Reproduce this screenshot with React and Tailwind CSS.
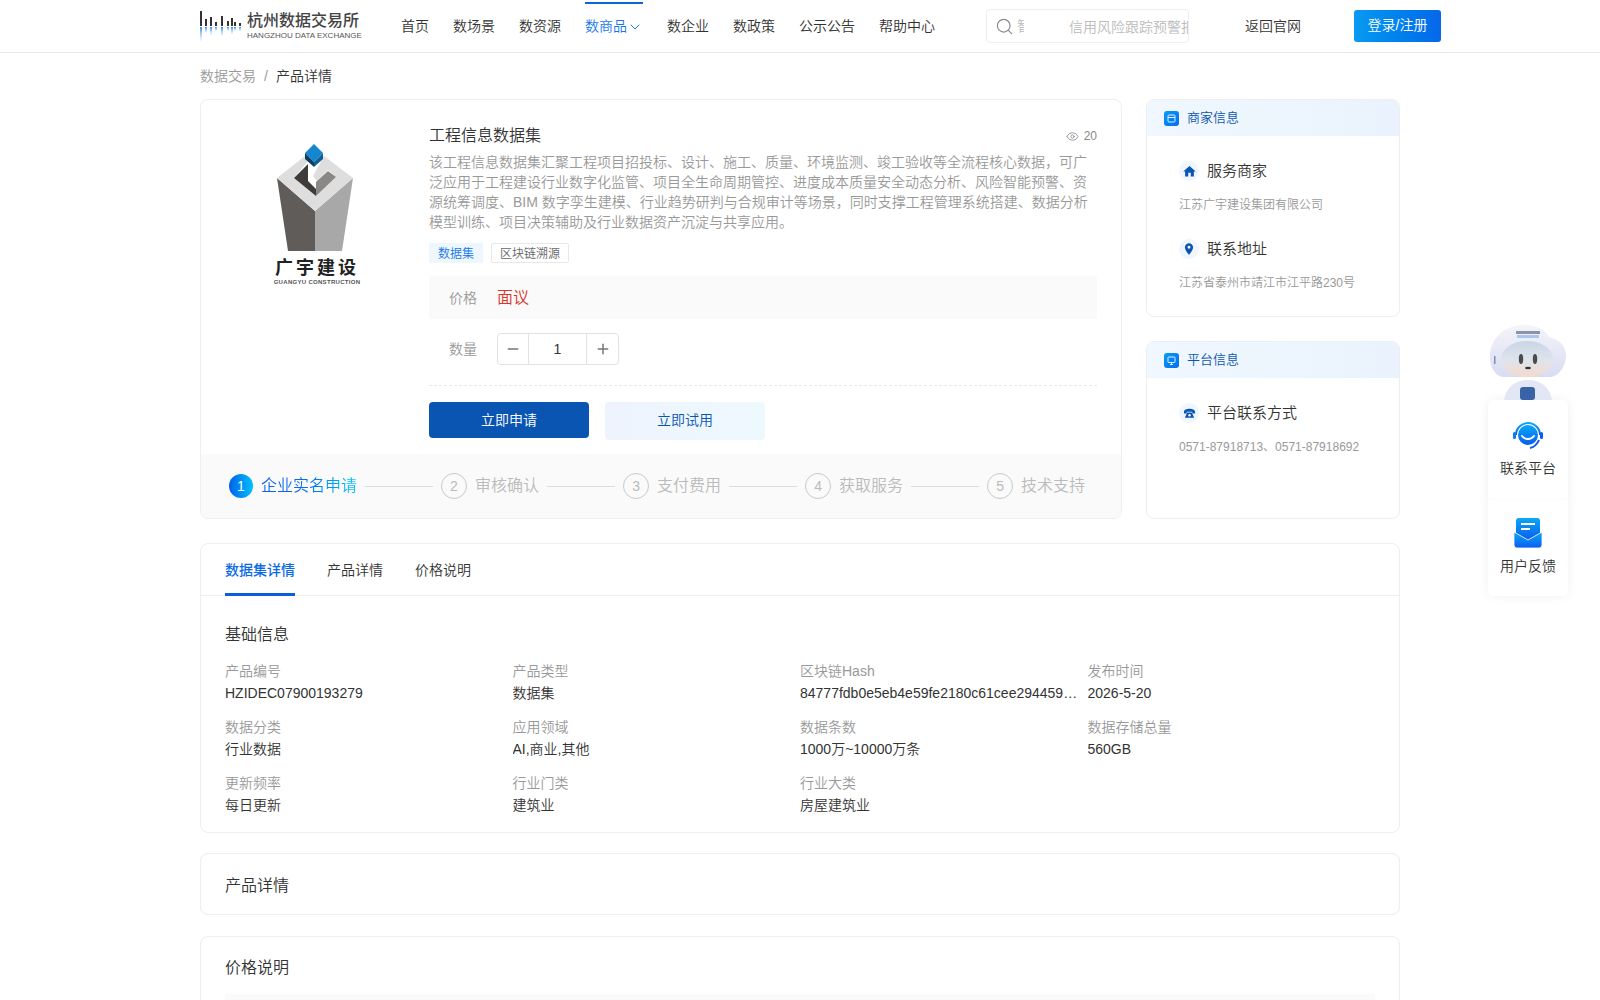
import { useState } from "react";
import { ChevronDown, Search, Eye, Minus, Plus } from "lucide-react";
import { MdHome, MdLocationOn } from "react-icons/md";

const navItems = ["首页", "数场景", "数资源", "数商品", "数企业", "数政策", "公示公告", "帮助中心"];

const steps = ["企业实名申请", "审核确认", "支付费用", "获取服务", "技术支持"];

const infoRows = [
  [
    ["产品编号", "HZIDEC07900193279"],
    ["产品类型", "数据集"],
    ["区块链Hash", "84777fdb0e5eb4e59fe2180c61cee294459e4e1f8a3b2c"],
    ["发布时间", "2026-5-20"],
  ],
  [
    ["数据分类", "行业数据"],
    ["应用领域", "AI,商业,其他"],
    ["数据条数", "1000万~10000万条"],
    ["数据存储总量", "560GB"],
  ],
  [
    ["更新频率", "每日更新"],
    ["行业门类", "建筑业"],
    ["行业大类", "房屋建筑业"],
  ],
];

function ExchangeLogo() {
  // x, height of each bar above the middle line
  const bars = [[0, 15], [5, 7], [10, 9], [15, 4], [21, 10], [27, 5], [31, 8], [34, 4], [39, 3]];
  return (
    <svg width="42" height="30" viewBox="0 0 42 30" className="shrink-0">
      <defs>
        <linearGradient id="fade" x1="0" y1="0" x2="0" y2="1">
          <stop offset="0" stopColor="#2f8ef0" />
          <stop offset="1" stopColor="#8cc4fa" stopOpacity="0.1" />
        </linearGradient>
      </defs>
      {bars.map(([x, h]) => (
        <g key={x}>
          <rect x={x} y={15 - h} width="2" height={h} fill="#333" />
          <rect x={x} y="16" width="2" height={Math.max(h - 1, 4)} fill="url(#fade)" />
        </g>
      ))}
    </svg>
  );
}

function GuangyuLogo() {
  return (
    <svg width="80" height="108" viewBox="0 0 80 108" className="block">
      <polygon points="0,34 38,67 38,107 11,107" fill="#5f5c5a" />
      <polygon points="76,34 38,67 38,107 65,107" fill="#a8a8a8" />
      <polygon points="0,34 28,12 31,17 17,34 39,52 59,33 51,26 40,37 36,32 47,12 76,34 38,67" fill="#dedede" />
      <polygon points="17,34 31,20 31,37 39,45 39,52" fill="#3f3b38" />
      <polygon points="39,38 51,27 59,33 39,52" fill="#8a8886" />
      <polygon points="28,9 37,0 46,9 37,18" fill="#1487d0" />
      <polygon points="28,9 37,18 37,23 28,15" fill="#0b3f63" />
      <polygon points="46,9 37,18 37,23 46,15" fill="#0f5f98" />
    </svg>
  );
}

function DeskPhone() {
  return (
    <svg width="13" height="13" viewBox="0 0 14 14">
      <path d="M1 5.5C1 3 4 2 7 2s6 1 6 3.5V7h-3V5.2H4V7H1z" fill="#0a55b2" />
      <path d="M4.5 6h5L12 11.5H2z" fill="#0a55b2" />
      <circle cx="7" cy="8.8" r="1.3" fill="#eff6fe" />
    </svg>
  );
}

function SideHead({ title, children }) {
  return (
    <div className="flex h-[36px] items-center gap-[8px] bg-gradient-to-r from-[#f0f7fe] to-[#eaf3fd] pl-[17px]">
      <span className="flex h-[15px] w-[15px] items-center justify-center rounded-[3px] bg-gradient-to-br from-[#0b9cf5] to-[#0a6cf0]">
        {children}
      </span>
      <span className="text-[13px] text-[#0b55b0]">{title}</span>
    </div>
  );
}

function SideItem({ icon, title, text }) {
  return (
    <div>
      <div className="flex items-center gap-2">
        <span className="flex h-5 w-5 items-center justify-center rounded-full bg-[#eff6fe]">{icon}</span>
        <span className="text-[15px] leading-6 text-[#333]">{title}</span>
      </div>
      <p className="mt-[12px] text-[12px] leading-5 text-[#999]">{text}</p>
    </div>
  );
}

function Step({ n, label, last }) {
  const active = n === 1;
  return (
    <div className="flex items-center">
      {active ? (
        <span className="flex h-6 w-6 items-center justify-center rounded-full bg-gradient-to-r from-[#0a5fe8] to-[#05c0fb] text-[14px] text-white">
          {n}
        </span>
      ) : (
        <span className="flex h-[26px] w-[26px] items-center justify-center rounded-full border border-[#c9c9c9] text-[14px] text-[#bbb]">
          {n}
        </span>
      )}
      <span
        className={
          active
            ? "ml-2 bg-gradient-to-r from-[#0a5fe8] via-[#0a6ef0] to-[#08c8ff] bg-clip-text text-[16px] text-transparent"
            : "ml-2 text-[16px] text-[#bbb]"
        }
      >
        {label}
      </span>
      {!last && <span className="ml-2 h-px w-[68px] bg-[#ddd]" />}
      {!last && <span className="w-2" />}
    </div>
  );
}

function Section({ title, children, className }) {
  return (
    <div className={"rounded-[8px] border border-[#eee] bg-white px-6 " + className}>
      <h3 className="text-[16px] leading-6 text-[#333]">{title}</h3>
      {children}
    </div>
  );
}

export default function App() {
  const [tab, setTab] = useState(0);
  const [count, setCount] = useState(1);

  return (
    <div className="relative h-[1000px] overflow-hidden bg-white font-['Liberation_Sans','Noto_Sans_CJK_SC',sans-serif] text-[14px] font-[350] text-[#333]">
      <header className="flex h-[53px] border-b border-[#e8e8e8] pl-[200px]">
        <div className="flex w-[1241px] shrink-0 items-center">
          <div className="flex w-[201px] shrink-0 items-center">
            <ExchangeLogo />
            <div className="ml-[5px] w-[114px]">
              <div className="whitespace-nowrap text-[16px] font-medium leading-[19px] text-[#444]">杭州数据交易所</div>
              <div className="whitespace-nowrap text-[8px] font-normal leading-[11px] text-[#555]">HANGZHOU DATA EXCHANGE</div>
            </div>
          </div>
          <nav className="flex h-full items-center gap-6">
            {navItems.map((item, i) => (
              <a
                key={item}
                className={
                  i === 3
                    ? "mt-[2px] flex h-[50px] items-center whitespace-nowrap border-t-2 border-[#0a66d8] pb-[3px] text-[#1677e8]"
                    : "mt-[1px] whitespace-nowrap text-[#333]"
                }
              >
                {item}
                {i === 3 && <ChevronDown size={16} strokeWidth={1.5} />}
              </a>
            ))}
          </nav>
          <div className="ml-[51px] flex h-[34px] w-[203px] shrink-0 items-center overflow-hidden rounded-[4px] border border-[#eee]">
            <Search size={19} strokeWidth={1.5} className="ml-[8px] shrink-0 text-[#888]" />
            <span className="ml-[3px] w-[7px] shrink-0 overflow-hidden text-[#bbb]">智</span>
            <span className="ml-[45px] mt-[2px] whitespace-nowrap text-[#bbb]">信用风险跟踪预警报告</span>
          </div>
          <a className="ml-[56px] whitespace-nowrap text-[#333]">返回官网</a>
          <button className="ml-[53px] h-[32px] w-[87px] shrink-0 rounded-[3px] bg-gradient-to-r from-[#0a9af0] to-[#0667ea] pb-[1px] text-[14px] text-white">
            登录/注册
          </button>
        </div>
      </header>

      <div className="mx-auto w-[1200px]">
        <div className="flex h-[46px] items-center text-[14px]">
          <span className="text-[#999]">数据交易</span>
          <span className="mx-2 text-[#999]">/</span>
          <span className="text-[#333]">产品详情</span>
        </div>

        <div className="flex items-stretch gap-6">
          <div className="w-[922px] overflow-hidden rounded-[8px] border border-[#eee]">
            <div className="flex h-[354px]">
              <div className="flex w-[228px] shrink-0 flex-col items-center pl-[4px] pt-[44px]">
                <GuangyuLogo />
                <div className="mt-[6px] whitespace-nowrap text-[18px] font-bold leading-[20px] tracking-[3px] text-[#222]">广宇建设</div>
                <div className="whitespace-nowrap text-[6px] font-bold leading-[8px] tracking-[0.3px] text-[#555]">GUANGYU CONSTRUCTION</div>
              </div>
              <div className="w-[668px] pt-[24px]">
                <div className="flex items-center justify-between">
                  <h1 className="text-[16px] font-[350] leading-[24px] text-[#333]">工程信息数据集</h1>
                  <span className="flex items-center gap-[5px] text-[12px] text-[#888]">
                    <Eye size={13} strokeWidth={1.5} />
                    20
                  </span>
                </div>
                <p className="mt-[4px] text-[14px] leading-[20px] text-[#999]">
                  该工程信息数据集汇聚工程项目招投标、设计、施工、质量、环境监测、竣工验收等全流程核心数据，可广泛应用于工程建设行业数字化监管、项目全生命周期管控、进度成本质量安全动态分析、风险智能预警、资源统筹调度、BIM 数字孪生建模、行业趋势研判与合规审计等场景，同时支撑工程管理系统搭建、数据分析模型训练、项目决策辅助及行业数据资产沉淀与共享应用。
                </p>
                <div className="mt-[11px] flex gap-2">
                  <span className="flex h-5 w-[54px] items-center justify-center rounded-[2px] bg-[#eef6fe] pt-[1px] text-[12px] text-[#1677e8]">数据集</span>
                  <span className="flex h-5 w-[78px] items-center justify-center rounded-[2px] border border-[#e8e8e8] pt-[1px] text-[12px] text-[#666]">区块链溯源</span>
                </div>
                <div className="mt-[13px] flex h-[43px] items-center rounded-[2px] bg-[#fafafa] pl-5 pt-[1px]">
                  <span className="w-[48px] text-[#999]">价格</span>
                  <span className="text-[16px] text-[#d9362b]">面议</span>
                </div>
                <div className="mt-[14px] flex items-center pl-5">
                  <span className="w-[48px] text-[#999]">数量</span>
                  <div className="flex h-8 w-[122px] items-center rounded-[4px] border border-[#e2e2e2]">
                    <button className="flex h-full w-[30px] items-center justify-center" onClick={() => setCount(Math.max(1, count - 1))}>
                      <Minus size={16} strokeWidth={2.25} className="text-[#777]" />
                    </button>
                    <span className="flex h-full flex-1 items-center justify-center border-x border-[#e2e2e2] text-[#333]">{count}</span>
                    <button className="flex h-full w-[31px] items-center justify-center" onClick={() => setCount(count + 1)}>
                      <Plus size={16} strokeWidth={2.25} className="text-[#777]" />
                    </button>
                  </div>
                </div>
                <div className="mt-[20px] border-t border-dashed border-[#e8e8e8]" />
                <div className="mt-[16px] flex gap-4">
                  <button className="h-[36px] w-[160px] rounded-[4px] bg-[#0a55b2] text-white">立即申请</button>
                  <button className="h-[38px] w-[160px] rounded-[4px] bg-gradient-to-r from-[#eef3fd] to-[#eef9fe] pb-[2px] text-[#0a55b2]">立即试用</button>
                </div>
              </div>
            </div>
            <div className="flex h-[64px] items-center bg-[#fafafa] pl-[28px]">
              {steps.map((s, i) => (
                <Step key={s} n={i + 1} label={s} last={i === steps.length - 1} />
              ))}
            </div>
          </div>

          <div className="flex w-[254px] flex-col gap-6">
            <div className="h-[218px] overflow-hidden rounded-[8px] border border-[#eee]">
              <SideHead title="商家信息">
                <svg width="9" height="9" viewBox="0 0 9 9" fill="none" stroke="#dff0ff" strokeWidth="1">
                  <rect x="1" y="1" width="7" height="7" rx="1" />
                  <path d="M1 3.5h7" />
                </svg>
              </SideHead>
              <div className="flex flex-col gap-[22px] pl-[32px] pt-[23px]">
                <SideItem icon={<MdHome size={15} color="#0a55b2" />} title="服务商家" text="江苏广宇建设集团有限公司" />
                <SideItem icon={<MdLocationOn size={14} color="#0a55b2" />} title="联系地址" text="江苏省泰州市靖江市江平路230号" />
              </div>
            </div>
            <div className="flex-1 overflow-hidden rounded-[8px] border border-[#eee]">
              <SideHead title="平台信息">
                <svg width="9" height="9" viewBox="0 0 9 9" fill="none" stroke="#dff0ff" strokeWidth="1">
                  <rect x="1" y="1" width="7" height="5.5" rx="0.5" />
                  <path d="M4.5 6.5V8.5M3 8.5h3" />
                </svg>
              </SideHead>
              <div className="pl-[32px] pt-[23px]">
                <SideItem icon={<DeskPhone />} title="平台联系方式" text="0571-87918713、0571-87918692" />
              </div>
            </div>
          </div>
        </div>

        <div className="mt-6 h-[290px] rounded-[8px] border border-[#eee]">
          <div className="flex h-[52px] gap-8 border-b border-[#eee] px-6">
            {["数据集详情", "产品详情", "价格说明"].map((t, i) => (
              <button
                key={t}
                onClick={() => setTab(i)}
                className={
                  tab === i
                    ? "h-[52px] border-b-[3px] border-[#0a5ddd] pt-[4px] font-medium text-[#0b6be6]"
                    : "h-[52px] border-b-[3px] border-transparent pt-[4px] text-[#333]"
                }
              >
                {t}
              </button>
            ))}
          </div>
          <div className="px-6 pt-[27px]">
            <h3 className="text-[16px] leading-6 text-[#333]">基础信息</h3>
            <div className="mt-[14px] flex flex-col gap-[14px]">
              {infoRows.map((row, r) => (
                <div key={r} className="grid grid-cols-4">
                  {row.map(([k, v]) => (
                    <div key={k} className="min-w-0 pr-[10px]">
                      <div className="leading-[20px] text-[#999]">{k}</div>
                      <div className="mt-[2px] truncate leading-[20px] text-[#333]">{v}</div>
                    </div>
                  ))}
                </div>
              ))}
            </div>
          </div>
        </div>

        <Section title="产品详情" className="mt-[20px] h-[62px] pt-[20px]" />
        <Section title="价格说明" className="mt-[21px] h-[120px] pt-[19px]">
          <div className="mt-[14px] h-[40px] bg-[#fafafa]" />
        </Section>
      </div>

      <div className="absolute right-[32px] top-[325px] flex w-[80px] flex-col items-center">
        <svg width="80" height="75" viewBox="0 2 80 75" className="block blur-[0.4px]">
          <defs>
            <linearGradient id="shell" x1="0" y1="0" x2="0" y2="1">
              <stop offset="0" stopColor="#f4f4f8" />
              <stop offset="1" stopColor="#d8dcf2" />
            </linearGradient>
            <linearGradient id="visor" x1="0" y1="0" x2="0" y2="1">
              <stop offset="0" stopColor="#c9d6e6" />
              <stop offset="0.55" stopColor="#dfe4ec" />
              <stop offset="1" stopColor="#f6d9cc" />
            </linearGradient>
          </defs>
          <path d="M2 34C2 14 18 2 36 2c12 0 21 4 25 12 10 2 17 9 17 19 0 9-7 21-16 21H16C7 54 2 44 2 34z" fill="url(#shell)" />
          <ellipse cx="39" cy="36" rx="26" ry="18" fill="url(#visor)" />
          <rect x="28" y="8" width="24" height="3" fill="#8a93a8" />
          <rect x="29" y="12" width="22" height="3" fill="#a9c6ee" />
          <rect x="6" y="33" width="1.5" height="8" fill="#7d8fb5" />
          <ellipse cx="33" cy="36" rx="2.2" ry="5" fill="#4a4a4a" />
          <ellipse cx="47" cy="36" rx="2.2" ry="5" fill="#4a4a4a" />
          <ellipse cx="40" cy="45" rx="3" ry="1.3" fill="#333" />
          <path d="M16 77c2-12 10-20 24-20s22 8 24 20z" fill="#e3e7f5" />
          <rect x="32" y="64" width="15" height="13" rx="3" fill="#3a62a6" />
        </svg>
        <div className="flex w-[80px] flex-col rounded-[6px] bg-white shadow-[0_0_12px_rgba(0,0,0,0.06)]">
          <div className="flex h-[98px] flex-col items-center justify-center shadow-[0_2px_4px_rgba(0,0,0,0.02)]">
            <svg width="32" height="32" viewBox="0 0 32 32">
              <defs>
                <linearGradient id="svc" x1="0" y1="0" x2="0" y2="1">
                  <stop offset="0" stopColor="#0aa8f5" />
                  <stop offset="1" stopColor="#0a5cf0" />
                </linearGradient>
              </defs>
              <path d="M4 16a12 12 0 0 1 24 0" fill="none" stroke="url(#svc)" strokeWidth="2" />
              <circle cx="16" cy="16" r="10" fill="url(#svc)" />
              <path d="M10 17c3 4 9 4 12 0" fill="none" stroke="#fff" strokeWidth="2" strokeLinecap="round" />
              <rect x="1" y="13" width="3" height="7" rx="1.5" fill="#0a7cf0" />
              <rect x="28" y="13" width="3" height="7" rx="1.5" fill="#0a5cf0" />
              <path d="M27 21c-2 5-5 7-9 8" fill="none" stroke="#0a5cf0" strokeWidth="2" />
            </svg>
            <span className="mt-[7px] text-[#333]">联系平台</span>
          </div>
          <div className="flex h-[98px] flex-col items-center justify-center">
            <svg width="30" height="32" viewBox="0 0 30 32">
              <defs>
                <linearGradient id="mail" x1="0" y1="0" x2="0" y2="1">
                  <stop offset="0" stopColor="#0aa8f5" />
                  <stop offset="1" stopColor="#0a5cf0" />
                </linearGradient>
              </defs>
              <rect x="3" y="1" width="24" height="22" rx="3" fill="url(#mail)" />
              <rect x="8" y="6" width="14" height="2" fill="#fff" />
              <rect x="8" y="11" width="9" height="2" fill="#fff" />
              <path d="M1 15l14 8 14-8v13a3 3 0 0 1-3 3H4a3 3 0 0 1-3-3z" fill="url(#mail)" stroke="#fff" strokeWidth="0.8" />
            </svg>
            <span className="mt-[7px] text-[#333]">用户反馈</span>
          </div>
        </div>
      </div>
    </div>
  );
}
